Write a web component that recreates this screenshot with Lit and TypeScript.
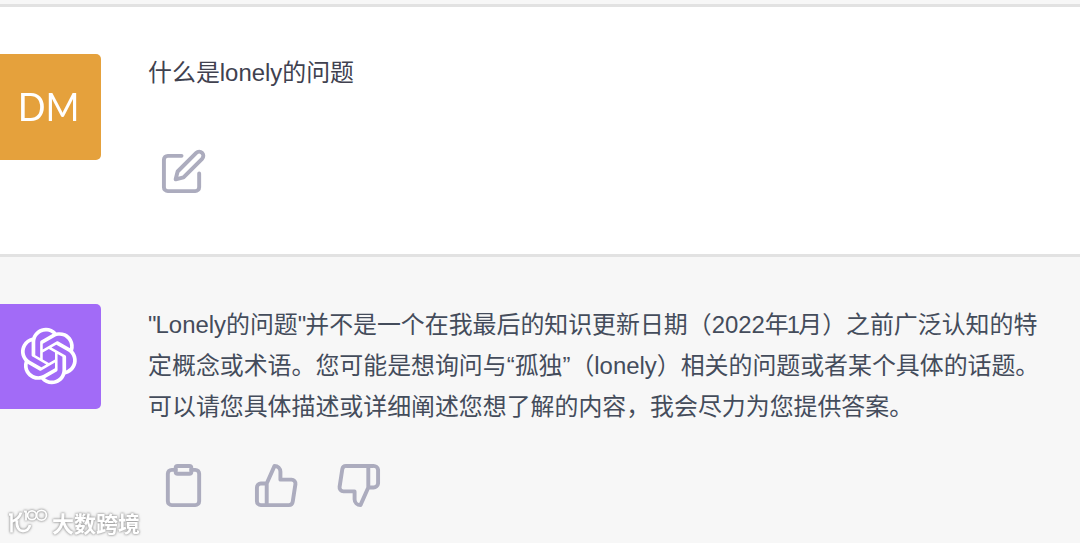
import {LitElement, html, css, svg} from 'lit';
import {customElement, property} from 'lit/decorators.js';

const icons = {
  edit: svg`
    <path d="M11 4H4a2 2 0 0 0-2 2v14a2 2 0 0 0 2 2h14a2 2 0 0 0 2-2v-7"></path>
    <path d="M18.5 2.5a2.121 2.121 0 0 1 3 3L12 15l-4 1 1-4 9.5-9.5z"></path>`,
  clipboard: svg`
    <path d="M16 4h2a2 2 0 0 1 2 2v14a2 2 0 0 1-2 2H6a2 2 0 0 1-2-2V6a2 2 0 0 1 2-2h2"></path>
    <rect x="8" y="2" width="8" height="4" rx="1" ry="1"></rect>`,
  up: svg`
    <path d="M14 9V5a3 3 0 0 0-3-3l-4 9v11h11.28a2 2 0 0 0 2-1.7l1.38-9a2 2 0 0 0-2-2.3zM7 22H4a2 2 0 0 1-2-2v-7a2 2 0 0 1 2-2h3"></path>`,
  down: svg`
    <path d="M10 15v4a3 3 0 0 0 3 3l4-9V2H5.72a2 2 0 0 0-2 1.7l-1.38 9a2 2 0 0 0 2 2.3zm7-13h2.67A2.31 2.31 0 0 1 22 4v7a2.31 2.31 0 0 1-2.33 2H17"></path>`,
};

@customElement('chat-icon')
class ChatIcon extends LitElement {

  @property()
  name: keyof typeof icons = 'edit';

  static styles = css`
  :host {
    display: block;
    width: 47px;
    height: 47px;
  }
  svg {
    display: block;
    width: 100%;
    height: 100%;
    fill: none;
    stroke: #acacbe;
    stroke-width: 2;
    stroke-linecap: round;
    stroke-linejoin: round;
  }
  `;

  render() {
    return html`<svg viewBox="0 0 24 24">${icons[this.name]}</svg>`;
  }
}

@customElement('app-root')
class AppRoot extends LitElement {

  @property()
  question = '什么是lonely的问题';

  @property()
  answer = [
    html`<span class="quote">"</span>Lonely的问题<span class="quote">"</span>并不是一个在我最后的知识更新日期（2022年<span class="one">1</span>月）之前广泛认知的特`,
    '定概念或术语。您可能是想询问与“孤独”（lonely）相关的问题或者某个具体的话题。',
    '可以请您具体描述或详细阐述您想了解的内容，我会尽力为您提供答案。',
  ];

  static styles = css`
  :host {
    display: flex;
    flex-direction: column;
    position: relative;
    width: 1080px;
    height: 543px;
    overflow: hidden;
    background: #f7f7f7;
    font-family: "Liberation Sans", "Noto Sans CJK SC", sans-serif;
  }
  .previous {
    flex: none;
    height: 4px;
  }
  .row {
    display: flex;
    box-sizing: border-box;
    border-top: 3px solid #e2e2e2;
    padding: 47.3px 0 0;
    gap: 46.7px;
  }
  .row.user {
    flex: none;
    height: 250px;
    background: #fff;
    color: #40414f;
  }
  .row.bot {
    flex: 1;
    padding-top: 46.6px;
    color: #444c5b;
  }
  .avatar {
    flex: none;
    display: flex;
    align-items: center;
    justify-content: center;
    width: 105.4px;
    height: 105.4px;
    margin-left: -4px;
    border-radius: 5px;
    color: #fff;
  }
  .user .avatar {
    background: #e5a13c;
    font: 38.5px/1 Lato, sans-serif;
  }
  .avatar span {
    padding-bottom: 2px;
    transform: scaleX(0.95);
  }
  .bot .avatar {
    background: #a26bf7;
  }
  .avatar svg {
    width: 58px;
    height: 58px;
    fill: #fff;
  }
  .content {
    display: flex;
    flex-direction: column;
  }
  .text {
    font-size: 23.92px;
    line-height: 41.3px;
    white-space: nowrap;
    text-spacing-trim: space-all;
  }
  .user .text {
    margin-top: -2px;
  }
  .text p {
    margin: 0;
  }
  .quote {
    letter-spacing: -1px;
  }
  .one {
    margin-left: -2px;
    letter-spacing: -1.8px;
  }
  .actions {
    display: flex;
    padding-left: 11.7px;
  }
  .user .actions {
    padding-top: 54.8px;
  }
  .bot .actions {
    padding-top: 34.6px;
  }
  .actions chat-icon + chat-icon {
    margin-left: 46.5px;
  }
  .actions chat-icon + chat-icon + chat-icon {
    margin-left: 34.8px;
  }
  .watermark {
    position: absolute;
    left: 8px;
    bottom: 5px;
    display: flex;
    align-items: center;
    gap: 4px;
    color: #fff;
    font: 700 22px/28px "Noto Sans CJK SC", sans-serif;
    filter: drop-shadow(0 0 1px #999) drop-shadow(0 0 1px #bbb);
  }
  .watermark span {
    padding-bottom: 2px;
  }
  .watermark svg {
    width: 40px;
    height: 28px;
    fill: none;
    stroke: #fff;
  }
  `;

  render() {
    return html`
    <div class="previous"></div>
    <div class="row user">
      <div class="avatar"><span>DM</span></div>
      <div class="content">
        <div class="text"><p>${this.question}</p></div>
        <div class="actions"><chat-icon name="edit"></chat-icon></div>
      </div>
    </div>
    <div class="row bot">
      <div class="avatar">${this._renderLogo()}</div>
      <div class="content">
        <div class="text">${this.answer.map(line => html`<p>${line}</p>`)}</div>
        <div class="actions">
          <chat-icon name="clipboard"></chat-icon>
          <chat-icon name="up"></chat-icon>
          <chat-icon name="down"></chat-icon>
        </div>
      </div>
    </div>
    <div class="watermark">
      <svg viewBox="0 0 40 28">
        <path stroke-width="2.6" d="M1 5.500h2.500v18"></path>
        <path stroke-width="2.800" d="M13 3.500c-1 4-4 7-9 9M9 11c-1 7 2 11 6 11c4 0 6-2 7-6"></path>
        <path stroke-width="1.8" d="M16 2.500h2v9"></path>
        <circle stroke-width="1.8" cx="24" cy="6.200" r="4.400"></circle>
        <circle stroke-width="1.8" cx="33.500" cy="6.200" r="4.900"></circle>
      </svg>
      <span>大数跨境</span>
    </div>
    `;
  }

  private _renderLogo() {
    return html`
    <svg viewBox="0 0 41 41">
      <path d="M37.5324 16.8707C37.9808 15.5241 38.1363 14.0974 37.9886 12.6859C37.8409 11.2744 37.3934 9.91076 36.676 8.68622C35.6126 6.83404 33.9882 5.3676 32.0373 4.4985C30.0864 3.62941 27.9098 3.40259 25.8215 3.85078C24.8796 2.7893 23.7219 1.94125 22.4257 1.36341C21.1295 0.785575 19.7249 0.491269 18.3058 0.500197C16.1708 0.495044 14.0893 1.16803 12.3614 2.42214C10.6335 3.67624 9.34853 5.44666 8.6917 7.47815C7.30085 7.76286 5.98686 8.3414 4.8377 9.17505C3.68854 10.0087 2.73073 11.0782 2.02839 12.312C0.956464 14.1591 0.498905 16.2988 0.721698 18.4228C0.944492 20.5467 1.83612 22.5449 3.268 24.1293C2.81966 25.4759 2.66413 26.9026 2.81182 28.3141C2.95951 29.7256 3.40701 31.0892 4.12437 32.3138C5.18791 34.1659 6.8123 35.6322 8.76321 36.5013C10.7141 37.3704 12.8907 37.5973 14.9789 37.1492C15.9208 38.2107 17.0786 39.0587 18.3747 39.6366C19.6709 40.2144 21.0755 40.5087 22.4946 40.4998C24.6307 40.5054 26.7133 39.8321 28.4418 38.5772C30.1704 37.3223 31.4556 35.5506 32.1119 33.5179C33.5027 33.2332 34.8167 32.6547 35.9659 31.821C37.115 30.9874 38.0728 29.9178 38.7752 28.684C39.8458 26.8371 40.3023 24.6979 40.0789 22.5748C39.8556 20.4517 38.9639 18.4544 37.5324 16.8707ZM22.4978 37.8849C20.7443 37.8874 19.0459 37.2733 17.6994 36.1501C17.7601 36.117 17.8666 36.0586 17.936 36.0161L25.9004 31.4156C26.1003 31.3019 26.2663 31.137 26.3813 30.9378C26.4964 30.7386 26.5563 30.5124 26.5549 30.2825V19.0542L29.9213 20.998C29.9389 21.0068 29.9541 21.0198 29.9656 21.0359C29.977 21.052 29.9842 21.0707 29.9867 21.0902V30.3889C29.9842 32.375 29.1946 34.2791 27.7909 35.6841C26.3872 37.0892 24.4838 37.8806 22.4978 37.8849ZM6.39227 31.0064C5.51397 29.4888 5.19742 27.7107 5.49804 25.9832C5.55718 26.0187 5.66048 26.0818 5.73461 26.1244L13.699 30.7248C13.8975 30.8408 14.1233 30.902 14.3532 30.902C14.583 30.902 14.8088 30.8408 15.0073 30.7248L24.731 25.1103V28.9979C24.7321 29.0177 24.7283 29.0376 24.7199 29.0556C24.7115 29.0736 24.6988 29.0893 24.6829 29.1012L16.6317 33.7497C14.9096 34.7416 12.8643 35.0097 10.9447 34.4954C9.02506 33.9811 7.38785 32.7263 6.39227 31.0064ZM4.29707 13.6194C5.17156 12.0998 6.55279 10.9364 8.19885 10.3327C8.19885 10.4013 8.19491 10.5228 8.19491 10.6071V19.808C8.19351 20.0378 8.25334 20.2638 8.36823 20.4629C8.48312 20.6619 8.64893 20.8267 8.84863 20.9404L18.5723 26.5542L15.206 28.4979C15.1894 28.5089 15.1703 28.5155 15.1505 28.5173C15.1307 28.5191 15.1107 28.516 15.0924 28.5082L7.04046 23.8557C5.32135 22.8601 4.06716 21.2235 3.55289 19.3046C3.03862 17.3858 3.30624 15.3413 4.29707 13.6194ZM31.955 20.0556L22.2312 14.4411L25.5976 12.4981C25.6142 12.4872 25.6333 12.4805 25.6531 12.4787C25.6729 12.4769 25.6928 12.4801 25.7111 12.4879L33.7631 17.1364C34.9967 17.849 36.0017 18.8982 36.6606 20.1613C37.3194 21.4244 37.6047 22.849 37.4832 24.2684C37.3617 25.6878 36.8382 27.0432 35.9743 28.1759C35.1103 29.3086 33.9415 30.1717 32.6047 30.6641C32.6047 30.5947 32.6047 30.4733 32.6047 30.3889V21.188C32.6066 20.9586 32.5474 20.7328 32.4332 20.5338C32.319 20.3348 32.154 20.1698 31.955 20.0556ZM35.3055 15.0128C35.2464 14.9765 35.1431 14.9142 35.069 14.8717L27.1045 10.2712C26.906 10.1554 26.6803 10.0943 26.4504 10.0943C26.2206 10.0943 25.9948 10.1554 25.7963 10.2712L16.0726 15.8858V11.9982C16.0715 11.9783 16.0753 11.9585 16.0837 11.9405C16.0921 11.9225 16.1048 11.9068 16.1207 11.8949L24.1719 7.25025C25.4053 6.53903 26.8158 6.19376 28.2383 6.25482C29.6608 6.31589 31.0364 6.78077 32.2044 7.59508C33.3723 8.40939 34.2842 9.53945 34.8334 10.8531C35.3826 12.1667 35.5464 13.6095 35.3055 15.0128ZM14.2424 21.9419L10.8752 19.9981C10.8576 19.9893 10.8423 19.9763 10.8309 19.9602C10.8195 19.9441 10.8122 19.9254 10.8098 19.9058V10.6071C10.8107 9.18295 11.2173 7.78848 11.9819 6.58696C12.7466 5.38544 13.8377 4.42659 15.1275 3.82264C16.4173 3.21869 17.8524 2.99464 19.2649 3.1767C20.6775 3.35876 22.0089 3.93941 23.1034 4.85067C23.0427 4.88379 22.937 4.94215 22.8668 4.98473L14.9024 9.58517C14.7025 9.69878 14.5366 9.86356 14.4215 10.0626C14.3065 10.2616 14.2466 10.4877 14.2479 10.7175L14.2424 21.9419ZM16.071 17.9991L20.4018 15.4978L24.7325 17.9975V22.9985L20.4018 25.4983L16.071 22.9985V17.9991Z"></path>
    </svg>`;
  }
}
